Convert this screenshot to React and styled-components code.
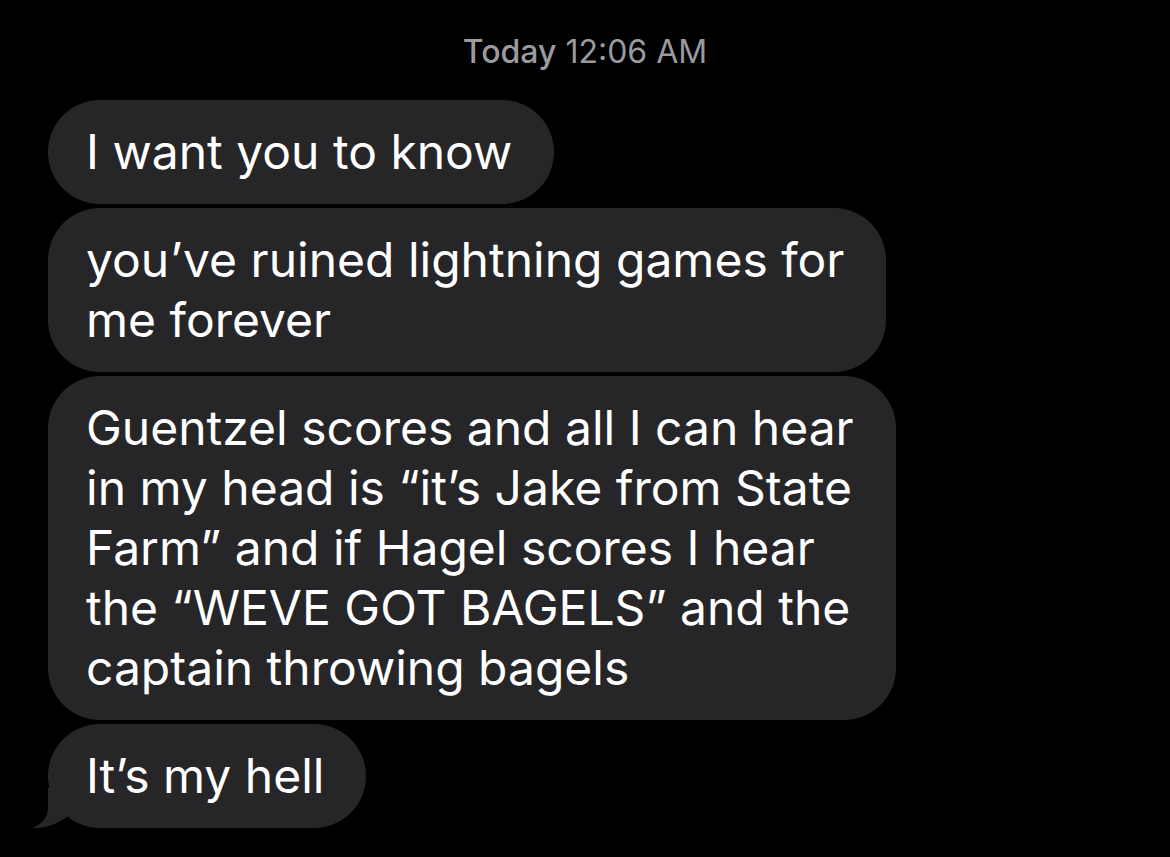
import React from 'react';
import styled, { createGlobalStyle } from 'styled-components';

const GlobalStyle = createGlobalStyle`
  html, body {
    margin: 0;
    padding: 0;
    background: #000;
  }
  body {
    font-family: Inter, "Noto Sans", "Liberation Sans", sans-serif;
    -webkit-font-smoothing: antialiased;
  }
`;

const Thread = styled.div`
  width: 1170px;
  height: 857px;
  background: #000;
  box-sizing: border-box;
  padding: 30px 0 0 48px;
  display: flex;
  flex-direction: column;
  align-items: flex-start;
  gap: 4px;
  overflow: hidden;
`;

const Stamp = styled.div`
  align-self: stretch;
  margin-left: -48px;
  text-align: center;
  color: #9a9a9f;
  font-size: 32px;
  line-height: 44px;
  margin-bottom: 22px;
  b {
    font-weight: 500;
  }
`;

const Bubble = styled.div`
  position: relative;
  background: #262628;
  color: #fff;
  font-size: 48px;
  line-height: 60px;
  padding: 22px 42px 22px 38px;
  border-radius: 52px;
  white-space: nowrap;
`;

const Tail = styled.svg`
  position: absolute;
  left: -16px;
  bottom: 0;
  width: 44px;
  height: 40px;
`;

const messages = [
  ['I want you to know'],
  ['you\u2019ve ruined lightning games for', 'me forever'],
  [
    'Guentzel scores and all I can hear',
    'in my head is \u201cit\u2019s Jake from State',
    'Farm\u201d and if Hagel scores I hear',
    'the \u201cWEVE GOT BAGELS\u201d and the',
    'captain throwing bagels',
  ],
  ['It\u2019s my hell'],
];

const App = () => {
  return (
    <>
      <GlobalStyle />
      <Thread>
        <Stamp>
          <b>Today</b> 12:06 AM
        </Stamp>
        {messages.map((lines, i) => (
          <Bubble key={i}>
            {i === messages.length - 1 && (
              <Tail viewBox="0 0 44 40">
                <path d="M16 0 L16 20 C16 30 9 37 0 40 C12 41 26 36 36 28 L44 0 Z" fill="#262628" />
              </Tail>
            )}
            {lines.map((line, j) => (
              <div key={j}>{line}</div>
            ))}
          </Bubble>
        ))}
      </Thread>
    </>
  );
};

export default App;
